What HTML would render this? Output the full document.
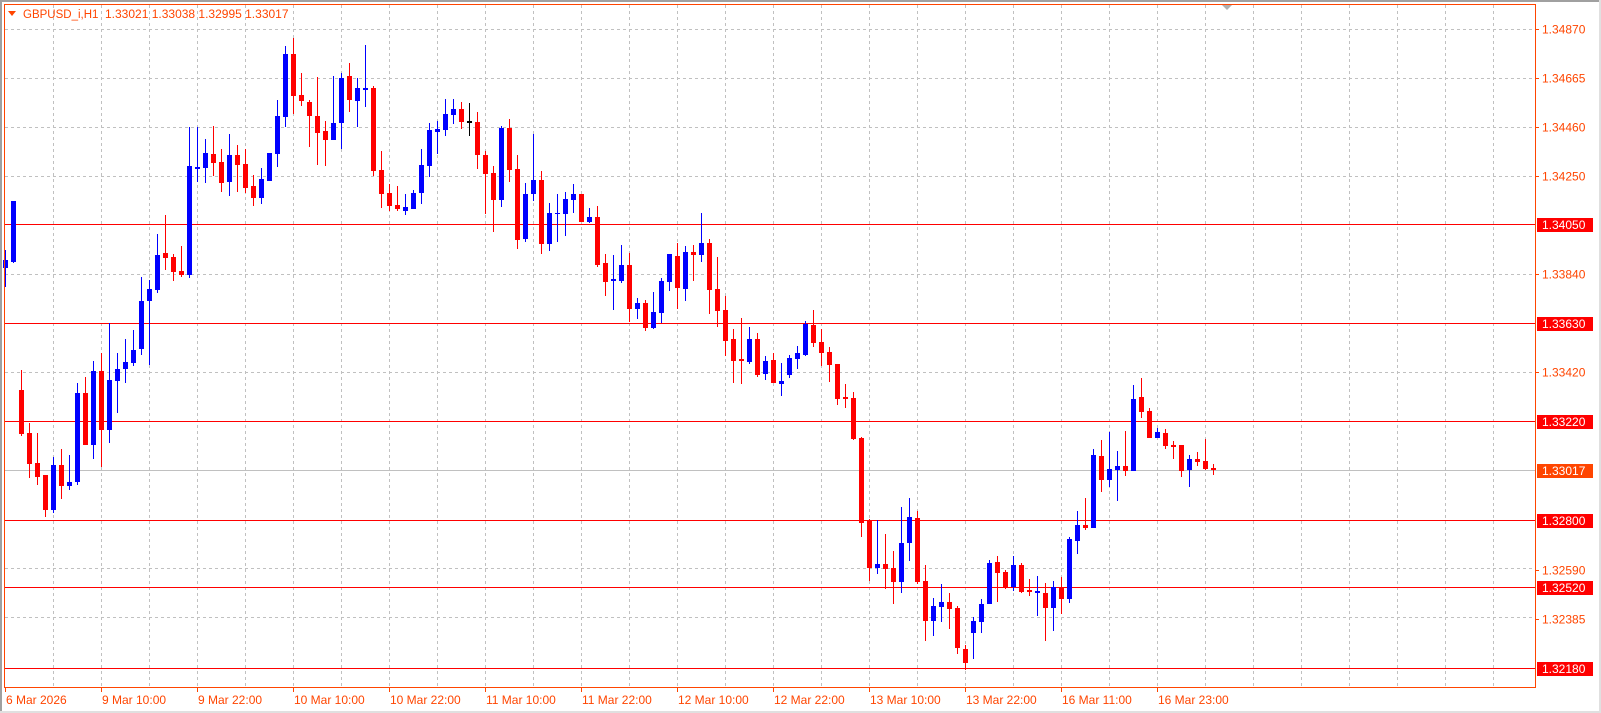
<!DOCTYPE html>
<html><head><meta charset="utf-8">
<style>
html,body{margin:0;padding:0;background:#fff;width:1601px;height:713px;overflow:hidden}
svg{display:block}
text{font-family:"Liberation Sans",sans-serif}
</style></head>
<body>
<svg id="c" width="1601" height="713" xmlns="http://www.w3.org/2000/svg"></svg>
<script>
var d=[[5,250,260,268,287,'b'],[13,201,201,262,263,'b'],[21,370,390,434,436,'r'],[29,423,433,464,478,'r'],[37,433,463,477,485,'r'],[45,475,475,510,517,'r'],[53,457,465,510,513,'b'],[61,449,465,486,499,'r'],[69,455,482,486,490,'b'],[77,383,393,482,485,'b'],[85,377,393,445,445,'r'],[93,361,371,445,459,'b'],[101,353,371,430,467,'r'],[109,323,380,430,443,'b'],[117,353,369,381,413,'b'],[125,339,362,369,383,'b'],[133,330,350,363,366,'b'],[141,277,301,349,355,'b'],[149,280,289,301,365,'b'],[157,234,255,290,293,'b'],[165,215,253,258,270,'r'],[173,254,257,272,281,'r'],[181,246,271,275,277,'r'],[189,127,166,275,278,'b'],[197,127,167,169,182,'b'],[205,139,153,168,183,'b'],[213,126,154,163,176,'r'],[221,149,162,183,192,'r'],[229,134,155,182,196,'b'],[237,145,155,165,192,'r'],[245,149,164,188,193,'r'],[253,175,186,198,206,'r'],[261,168,179,198,204,'b'],[269,153,153,181,181,'b'],[277,100,116,154,167,'b'],[285,46,54,117,127,'b'],[293,38,54,96,114,'r'],[301,73,95,101,106,'r'],[309,100,102,116,147,'r'],[317,77,116,133,165,'r'],[325,121,131,140,166,'r'],[333,76,123,140,140,'b'],[341,73,78,123,149,'b'],[349,63,76,100,112,'r'],[357,78,88,101,127,'b'],[365,45,88,90,107,'b'],[373,86,88,171,176,'r'],[381,151,170,194,208,'r'],[389,184,193,206,211,'r'],[397,186,205,209,211,'r'],[405,194,207,211,215,'b'],[413,190,193,209,209,'b'],[421,149,165,193,204,'b'],[429,123,130,166,177,'b'],[437,121,129,132,154,'b'],[445,99,114,130,136,'b'],[453,99,109,115,124,'b'],[461,102,109,122,129,'r'],[469,103,121,123,136,'k'],[477,112,122,155,169,'r'],[485,151,155,174,214,'r'],[493,166,173,200,232,'r'],[501,126,128,200,207,'b'],[509,119,128,170,182,'r'],[517,155,169,240,249,'r'],[525,183,194,239,242,'b'],[533,134,180,194,201,'b'],[541,171,180,244,254,'r'],[549,203,213,244,251,'b'],[557,194,213,214,242,'b'],[565,192,199,214,236,'b'],[573,184,194,200,213,'b'],[581,194,194,222,222,'r'],[589,208,217,222,223,'b'],[597,206,217,265,267,'r'],[605,254,263,282,296,'r'],[613,255,279,281,310,'b'],[621,245,265,281,283,'b'],[629,253,265,309,322,'r'],[637,298,303,309,319,'b'],[645,300,303,328,331,'r'],[653,292,312,328,329,'b'],[661,278,281,313,323,'b'],[669,254,254,282,291,'b'],[677,243,256,288,309,'r'],[685,246,252,289,301,'b'],[693,245,252,255,281,'r'],[701,213,243,255,262,'b'],[709,239,243,290,314,'r'],[717,257,289,311,327,'r'],[725,296,310,341,356,'r'],[733,329,339,361,383,'r'],[741,318,359,361,384,'r'],[749,327,339,362,364,'b'],[757,333,339,375,377,'r'],[765,356,361,374,380,'b'],[773,353,360,383,383,'r'],[781,363,381,384,396,'b'],[789,355,358,375,378,'b'],[797,346,353,359,369,'b'],[805,321,324,355,356,'b'],[813,310,325,343,347,'r'],[821,329,342,353,366,'r'],[829,347,352,365,382,'r'],[837,364,364,399,405,'r'],[845,384,397,399,408,'r'],[853,392,398,439,440,'r'],[861,437,438,523,537,'r'],[869,519,520,568,581,'r'],[877,520,564,568,574,'b'],[885,534,564,569,589,'r'],[893,551,568,582,604,'r'],[901,507,543,582,593,'b'],[909,498,517,543,561,'b'],[917,511,518,582,584,'r'],[925,565,581,621,641,'r'],[933,598,606,621,636,'b'],[941,584,602,607,622,'b'],[949,593,602,609,629,'r'],[957,606,608,648,654,'r'],[965,645,649,663,670,'r'],[973,617,621,633,659,'b'],[981,599,604,622,633,'b'],[989,560,563,604,604,'b'],[997,556,562,573,602,'r'],[1005,570,572,588,589,'r'],[1013,556,565,587,591,'b'],[1021,563,565,592,593,'r'],[1029,579,590,592,596,'r'],[1037,576,591,593,616,'b'],[1045,583,593,608,641,'r'],[1053,581,587,608,631,'b'],[1061,577,587,599,614,'r'],[1069,537,539,599,603,'b'],[1077,511,525,541,554,'b'],[1085,498,525,528,530,'r'],[1093,449,455,528,528,'b'],[1101,440,456,480,492,'r'],[1109,432,469,480,487,'b'],[1117,451,466,470,501,'b'],[1125,431,466,471,476,'r'],[1133,385,399,471,471,'b'],[1141,378,397,412,418,'r'],[1149,408,411,438,438,'r'],[1157,428,432,438,438,'b'],[1165,429,433,446,449,'r'],[1173,441,445,447,459,'r'],[1181,445,445,471,477,'r'],[1189,455,459,470,487,'b'],[1197,452,459,462,466,'r'],[1205,439,461,469,470,'r'],[1213,464,468,470,475,'r']];
var s='';
var OR='#ff4500';
var reds=[224,323,421,520,587,668];
s+='<rect x="0" y="0" width="1601" height="713" fill="#fff"/>';
s+='<rect x="0" y="0" width="1601" height="2" fill="#a0a0a0"/>';
s+='<rect x="0" y="0" width="2" height="713" fill="#a0a0a0"/>';
for(var k=0;k<14;k++){var y=29+49*k;var skip=false;reds.forEach(function(r){if(Math.abs(r-y)<=2)skip=true;});if(y==470)skip=true;
if(!skip)s+='<line x1="5" y1="'+(y+0.5)+'" x2="1535" y2="'+(y+0.5)+'" stroke="#c0c0c0" stroke-dasharray="3,3"/>';}
for(var k=0;k<31;k++){var x=53+48*k+0.5;s+='<line x1="'+x+'" y1="5" x2="'+x+'" y2="687" stroke="#c0c0c0" stroke-dasharray="3,3"/>';}
s+='<line x1="5" y1="470.5" x2="1535" y2="470.5" stroke="#c0c0c0"/>';
reds.forEach(function(y){s+='<line x1="5" y1="'+(y+0.5)+'" x2="1535" y2="'+(y+0.5)+'" stroke="#ff0000"/>';});
var col={b:'#0000ff',r:'#ff0000',k:'#000'};
d.forEach(function(c){var x=c[0],C=col[c[5]];
s+='<rect x="'+x+'" y="'+c[1]+'" width="1" height="'+Math.max(1,c[4]-c[1])+'" fill="'+C+'"/>';
s+='<rect x="'+(x-2)+'" y="'+c[2]+'" width="5" height="'+Math.max(1,c[3]-c[2])+'" fill="'+C+'"/>';});
s+='<rect x="4.5" y="4.5" width="1531" height="683" fill="none" stroke="'+OR+'"/>';
s+='<polygon points="1222,5 1232,5 1227,10" fill="#b0b0b0"/>';
s+='<polygon points="8,11 16,11 12,16" fill="'+OR+'"/>';
s+='<text x="23" y="18" font-size="11.5" fill="'+OR+'">GBPUSD_i,H1</text>';
s+='<text x="105" y="18" font-size="12" fill="'+OR+'">1.33021 1.33038 1.32995 1.33017</text>';
[['1.34870',29],['1.34665',78],['1.34460',127],['1.34250',176],['1.33840',274],['1.33420',372],['1.32590',570],['1.32385',619]].forEach(function(p){
s+='<line x1="1536" y1="'+(p[1]+0.5)+'" x2="1539" y2="'+(p[1]+0.5)+'" stroke="'+OR+'"/>';
s+='<text x="1542" y="'+(p[1]+4.5)+'" font-size="12" fill="'+OR+'">'+p[0]+'</text>';});
[['1.34050',224,'#ff0000'],['1.33630',323,'#ff0000'],['1.33220',421,'#ff0000'],['1.33017',470,'#ff4500'],['1.32800',520,'#ff0000'],['1.32520',587,'#ff0000'],['1.32180',668,'#ff0000']].forEach(function(p){
s+='<rect x="1537" y="'+(p[1]-6)+'" width="56" height="14" fill="'+p[2]+'"/>';
s+='<text x="1542" y="'+(p[1]+5)+'" font-size="12" fill="#fff">'+p[0]+'</text>';});
var tl=["6 Mar 2026","9 Mar 10:00","9 Mar 22:00","10 Mar 10:00","10 Mar 22:00","11 Mar 10:00","11 Mar 22:00","12 Mar 10:00","12 Mar 22:00","13 Mar 10:00","13 Mar 22:00","16 Mar 11:00","16 Mar 23:00"];
tl.forEach(function(t,i){var x=(i==0?5:101+96*(i-1));
s+='<line x1="'+(x+0.5)+'" y1="688" x2="'+(x+0.5)+'" y2="692" stroke="'+OR+'"/>';
s+='<text x="'+(x+1)+'" y="704" font-size="12" fill="'+OR+'">'+t+'</text>';});
s+='<rect x="0" y="711" width="1601" height="2" fill="#e0e0e0"/>';
s+='<rect x="1599" y="0" width="2" height="713" fill="#e0e0e0"/>';
document.getElementById('c').innerHTML=s;
</script>
</body></html>
